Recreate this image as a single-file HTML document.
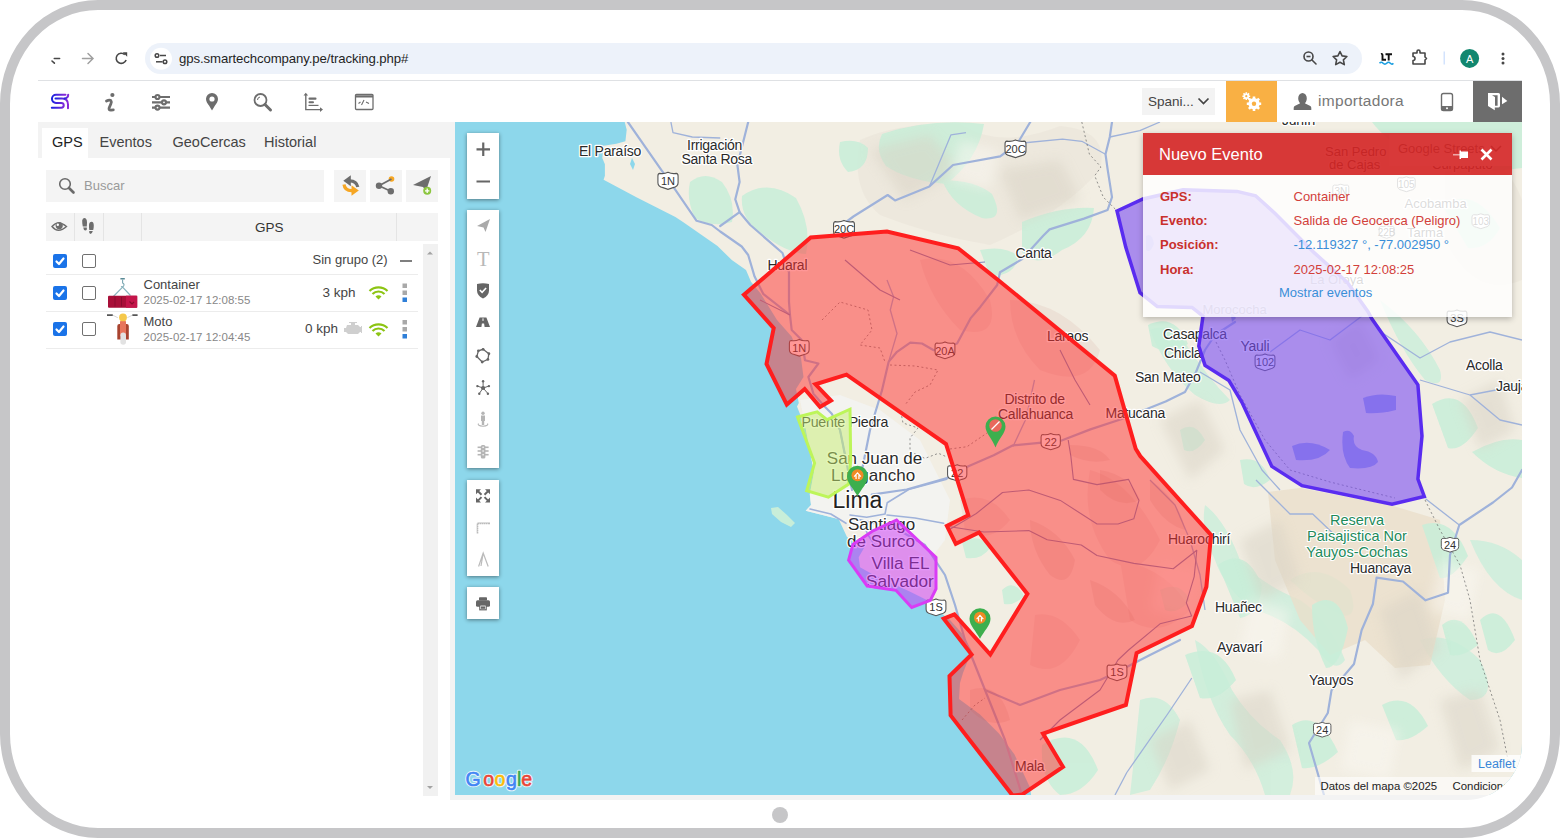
<!DOCTYPE html>
<html><head><meta charset="utf-8">
<style>
*{box-sizing:border-box;margin:0;padding:0}
html,body{width:1560px;height:838px;overflow:hidden;background:#fff;font-family:"Liberation Sans",sans-serif}
.a{position:absolute}
svg{position:absolute;overflow:visible}
#frame{left:0;top:0;width:1560px;height:838px;border:10px solid #c6c6c8;border-radius:98px/104px;z-index:50}
#home{left:772px;top:807px;width:16px;height:16px;border-radius:50%;background:#c6c6c8}
#pill{left:145px;top:43px;width:1217px;height:31px;border-radius:16px;background:#edf2fa}
#sep{left:38px;top:80px;width:1484px;height:1px;background:#dfe1e4}
#url{left:179px;top:51px;font-size:13.2px;color:#1f1f1f;letter-spacing:-0.1px;white-space:nowrap}
#screen{left:0;top:0;width:1560px;height:838px;clip-path:inset(81px 38px 38px 38px round 0 0 56px 0)}
.tab{position:absolute;top:133.5px;font-size:14.5px;color:#444;white-space:nowrap}
.ctl{position:absolute;left:467px;width:32px;background:#fff;box-shadow:0 1px 4px rgba(0,0,0,.45)}
.btn{position:absolute;top:170px;width:32px;height:32px;background:#f4f4f4}
.cb{position:absolute;width:14px;height:14px;border-radius:2px}
.cbon{background:#1a73e8}
.cboff{border:1.5px solid #707070;background:#fff}
.rsep{position:absolute;left:46px;width:372px;height:1px;background:#ececec}
.t{position:absolute;white-space:nowrap}
</style></head><body>
<div class="a" id="home"></div>
<div class="a" id="pill"></div>
<div class="a" id="sep"></div>
<div class="a" id="url">gps.smartechcompany.pe/tracking.php#</div>
<!-- browser icons -->
<svg style="left:0;top:0" width="1560" height="90">
  <g fill="none" stroke="#474747" stroke-width="1.6" stroke-linecap="round">
    <path d="M54.3 58.5 H59.6 M52 61 l2.4 2.2"/>
  </g>
  <g fill="none" stroke="#a0a0a0" stroke-width="1.5" stroke-linecap="round">
    <path d="M82.5 58.5 H93 M88 53.5 l5 5 l-5 5"/>
  </g>
  <g fill="none" stroke="#474747" stroke-width="1.6">
    <path d="M126.1 60 A5.1 5.1 0 1 1 124.8 54.6"/>
  </g>
  <path d="M122.8 52.3 L127.2 52.3 L127.2 56.7 Z" fill="#474747"/>
  <circle cx="161" cy="58.7" r="11" fill="#fff"/>
  <g stroke="#474747" stroke-width="1.5" fill="none">
    <circle cx="157" cy="55.5" r="1.8"/><path d="M160 55.5 H166"/>
    <circle cx="165" cy="61.8" r="1.8"/><path d="M156 61.8 H162.5"/>
  </g>
  <!-- right icons -->
  <g stroke="#474747" stroke-width="1.6" fill="none">
    <circle cx="1308.5" cy="56.5" r="4.5"/><path d="M1312 60 l4 4" stroke-linecap="round"/><path d="M1306.5 56.5 h4"/>
    <path d="M1340 51.5 l2.1 4.4 l4.8 .6 l-3.5 3.3 l.9 4.8 l-4.3 -2.3 l-4.3 2.3 l.9 -4.8 l-3.5 -3.3 l4.8 -.6 z" stroke-linejoin="round"/>
    <path d="M1413 53 h4 v-1.5 a1.5 1.5 0 0 1 3 0 v1.5 h5 v4 l1.5 1.5 l-1.5 1.5 v4 h-12 v-3.5 a2 2 0 0 0 0 -4 z" stroke-linejoin="round"/>
  </g>
  <path d="M1381 54 q1.5 -.5 1.5 1.5 v4.2 h3.5 M1385.5 54.2 h6.5 M1388.7 54.2 v6.3" stroke="#111" stroke-width="1.9" fill="none"/>
  <path d="M1379.5 63.2 q1.8 -1.8 3.6 0 t3.6 0 t3.6 0 t3 0" stroke="#1a9ee0" stroke-width="1.6" fill="none"/>
  <rect x="1443.5" y="51.5" width="1.5" height="13" fill="#d3e3fd"/>
  <circle cx="1469.6" cy="58.4" r="9.5" fill="#12876f"/>
  <text x="1469.6" y="62.6" text-anchor="middle" font-family="Liberation Sans" font-size="11" fill="#fff">A</text>
  <g fill="#474747"><circle cx="1503" cy="54" r="1.5"/><circle cx="1503" cy="58.5" r="1.5"/><circle cx="1503" cy="63" r="1.5"/></g>
</svg>

<div class="a" id="screen">
  <!-- header icons -->
  <svg style="left:0;top:0" width="1560" height="130">
    <defs><linearGradient id="lg" x1="0" x2="1"><stop offset="0" stop-color="#1b25e0"/><stop offset="1" stop-color="#8c2ad8"/></linearGradient></defs>
    <g fill="none" stroke="url(#lg)" stroke-width="2" stroke-linecap="round">
      <path d="M65.5 94.8 H56 A4.05 4.05 0 0 0 56 102.9 H61.3 A2.45 2.45 0 0 1 61.3 107.8 H51.8"/>
      <path d="M55.5 98.6 H62 Q68 98.6 68 104.5 V108.3"/>
      <path d="M68.2 94.8 Q68.2 98.2 64.5 98.6"/>
    </g>
    <circle cx="112.4" cy="95" r="2.1" fill="#6d6d6d"/>
    <path d="M106.5 101 Q109.5 99.4 110.9 100.6 Q111.8 101.6 110.8 104 L109.2 107.8 Q108.4 110.2 111 110.1 L113.3 109.9" stroke="#6d6d6d" stroke-width="2.8" fill="none" stroke-linecap="round" stroke-linejoin="round"/>
    <g stroke="#6d6d6d" stroke-width="2.2" fill="#fff">
      <path d="M152 97 H170 M152 102.3 H170 M152 107.6 H170"/>
      <circle cx="157.5" cy="97" r="2"/><circle cx="164" cy="102.3" r="2"/><circle cx="157.5" cy="107.6" r="2"/>
    </g>
    <path d="M212 93 a6 6 0 0 1 6 6 c0 2.5 -1.5 4.5 -3 6.5 l-3 5 l-3 -5 c-1.5 -2 -3 -4 -3 -6.5 a6 6 0 0 1 6 -6 z" fill="#6d6d6d"/>
    <circle cx="212" cy="99" r="2.6" fill="#fff"/>
    <g stroke="#6d6d6d" fill="none">
      <circle cx="260.5" cy="100" r="6" stroke-width="1.8"/>
      <path d="M265 104.5 l5.5 5.5" stroke-width="3" stroke-linecap="round"/>
      <path d="M257.5 100 a3 3 0 0 1 2.5 -3" stroke-width="1"/>
    </g>
    <g fill="#6d6d6d">
      <path d="M305.8 95 v14.6 h15" stroke="#6d6d6d" stroke-width="1.4" fill="none"/>
      <path d="M303.5 95.5 l2.3 -2.8 l2.3 2.8 z"/><path d="M320 107.3 l3 2.3 l-3 2.3 z"/>
      <rect x="308.5" y="97.5" width="8" height="2.2" rx="1"/>
      <rect x="308.5" y="101.3" width="5.5" height="2" rx="1"/>
      <rect x="308.5" y="104.8" width="10" height="1.2"/>
    </g>
    <g fill="none" stroke="#6d6d6d">
      <rect x="355.5" y="94.3" width="17.5" height="15.2" rx="1" stroke-width="1.3"/>
      <path d="M355.5 96.3 h17.5" stroke-width="2.2"/>
      <path d="M358.5 103.5 l2 -1.5 M361.5 105 l2.5 -5 M366 102 l3 1.5" stroke-width="1.1"/>
    </g>
    <!-- language select -->
    <rect x="1142" y="88" width="73" height="27" fill="#f3f3f3"/>
    <path d="M1198.5 98.5 l5 5 l5 -5" stroke="#444" stroke-width="1.7" fill="none"/>
    <rect x="1226" y="81" width="51" height="41" fill="#f9b044"/>
    <g fill="#fff">
      <circle cx="1254" cy="103.7" r="5.6"/>
      <g stroke="#fff" stroke-width="2.6"><path d="M1254 96.5 v14.4 M1246.8 103.7 h14.4 M1248.9 98.6 l10.2 10.2 M1259.1 98.6 l-10.2 10.2"/></g>
      <circle cx="1246.3" cy="96.2" r="2.8"/>
      <g stroke="#fff" stroke-width="1.6"><path d="M1246.3 92.3 v7.8 M1242.4 96.2 h7.8 M1243.5 93.4 l5.6 5.6 M1249.1 93.4 l-5.6 5.6"/></g>
    </g>
    <circle cx="1254" cy="103.7" r="2.2" fill="#f9b044"/>
    <circle cx="1246.3" cy="96.2" r="1.1" fill="#f9b044"/>
    <path d="M1302.5 93 a4.3 5.3 0 0 1 4.3 5.3 c0 2.5 -1 4 -2 5 l5.5 2.8 q1 .6 1 2 v1.8 h-17.6 v-1.8 q0 -1.4 1 -2 l5.5 -2.8 c-1 -1 -2 -2.5 -2 -5 a4.3 5.3 0 0 1 4.3 -5.3 z" fill="#6d6d6d"/>
    <rect x="1441.5" y="93.5" width="11" height="17" rx="2" fill="none" stroke="#6d6d6d" stroke-width="1.4"/>
    <rect x="1441.5" y="106" width="11" height="4.5" fill="#6d6d6d"/>
    <circle cx="1447" cy="108.2" r="1" fill="#fff"/>
    <rect x="1473" y="81" width="49" height="41" fill="#6d6d6d"/>
    <path d="M1488 93 H1498.5 Q1500 93 1500 94.5 V105.8 Q1500 107.5 1498.5 107.5 H1494.8 V110.2 L1488 106 Z" fill="#fff"/>
    <path d="M1492 95.2 H1497.6 V105.7 H1495 V97 Z" fill="#6d6d6d"/>
    <path d="M1502 96.8 L1507.3 101 L1502 104.3 Z" fill="#fff"/>
  </svg>
  <div class="t" style="left:1148px;top:94px;font-size:13.5px;color:#444">Spani...</div>
  <div class="t" style="left:1318px;top:92px;font-size:15.5px;color:#777;letter-spacing:.3px">importadora</div>

  <!-- left panel -->
  <div class="a" style="left:38px;top:122px;width:1484px;height:678px;background:#f3f3f3"></div>
  <div class="a" style="left:38px;top:158px;width:412px;height:642px;background:#fff"></div>
  <div class="a" style="left:42px;top:128px;width:46px;height:30px;background:#fff"></div>
  <div class="tab" style="left:52px;color:#222">GPS</div>
  <div class="tab" style="left:99.5px">Eventos</div>
  <div class="tab" style="left:172.5px">GeoCercas</div>
  <div class="tab" style="left:264px">Historial</div>
  <div class="a" style="left:46px;top:170px;width:278px;height:32px;background:#f4f4f4"></div>
  <div class="t" style="left:84px;top:178px;font-size:13px;color:#9a9a9a">Buscar</div>
  <div class="btn" style="left:334px"></div>
  <div class="btn" style="left:370px"></div>
  <div class="btn" style="left:406px"></div>
  <div class="a" style="left:46px;top:213px;width:392px;height:28px;background:#f4f4f4"></div>
  <div class="a" style="left:74px;top:213px;width:1px;height:28px;background:#e4e4e4"></div>
  <div class="a" style="left:103px;top:213px;width:1px;height:28px;background:#e4e4e4"></div>
  <div class="a" style="left:141px;top:213px;width:1px;height:28px;background:#e4e4e4"></div>
  <div class="a" style="left:396px;top:213px;width:1px;height:28px;background:#e4e4e4"></div>
  <div class="t" style="left:255px;top:220px;font-size:13.5px;color:#333">GPS</div>
  <div class="a" style="left:423px;top:244px;width:15px;height:552px;background:#f1f1f1"></div>
  <svg style="left:0;top:0" width="460" height="800">
    <path d="M427 254.5 l3 -3 l3 3 z" fill="#a3a3a3"/>
    <path d="M427 786 l3 3 l3 -3 z" fill="#a3a3a3"/>
    <!-- search icon -->
    <g stroke="#6a6a6a" fill="none"><circle cx="65" cy="184" r="5.3" stroke-width="1.6"/><path d="M69 188 l4.5 4.5" stroke-width="2.6" stroke-linecap="round"/></g>
    <!-- sync icon -->
    <path d="M350.8 175.3 L343.3 180.8 L350.8 186.3 Z" fill="#6d6d6d"/>
    <path d="M349 180.8 Q356.5 180.5 357.8 187" stroke="#6d6d6d" stroke-width="3.2" fill="none"/>
    <path d="M344 184.5 Q344.8 190.8 352 190.6" stroke="#f6a623" stroke-width="3.2" fill="none"/>
    <path d="M351.5 185.3 L358.8 190.6 L351.5 195.8 Z" fill="#f6a623"/>
    <!-- share -->
    <g fill="#6d6d6d"><circle cx="379" cy="185.8" r="3.2"/><circle cx="390.8" cy="191.2" r="3.2"/></g>
    <circle cx="391.5" cy="179" r="2.8" fill="#f6a623"/>
    <path d="M379 185.8 L391.5 179 M379 185.8 L390.8 191.2" stroke="#6d6d6d" stroke-width="1.8"/>
    <!-- send plus -->
    <path d="M413 185 L431 176 L426 191 L423 187 Z" fill="#6d6d6d"/>
    <circle cx="427.2" cy="190.8" r="4" fill="#8cc63f"/>
    <path d="M425 190.8 h4.4 M427.2 188.6 v4.4" stroke="#fff" stroke-width="1.3"/>
    <!-- eye -->
    <path d="M52 226.5 Q58 219.5 66.5 226.5 Q58 234 52 226.5 Z" fill="none" stroke="#6d6d6d" stroke-width="1.4"/>
    <circle cx="59.2" cy="225.6" r="3.6" fill="#6d6d6d"/>
    <circle cx="57.8" cy="224.7" r="1.2" fill="#fff"/>
    <!-- feet -->
    <path d="M84.2 218 Q87 218 87 222.5 L86.8 226.5 L82.8 226.5 Q82 222 82.2 220.5 Q82.6 218 84.2 218 Z" fill="#6d6d6d"/>
    <path d="M83.2 227.5 L86.8 227.5 Q87.3 230.5 85.4 230.6 Q83.6 230.4 83.2 227.5 Z" fill="#6d6d6d"/>
    <path d="M91.6 221.8 Q93.8 222 93.8 225.5 Q93.8 228 93.2 230 L89.3 230 Q88.8 227 89 225 Q89.3 221.8 91.6 221.8 Z" fill="#6d6d6d"/>
    <path d="M89.2 231 L92.8 231 Q92 234 90.4 234 Q88.8 233.6 89.2 231 Z" fill="#6d6d6d"/>
    <!-- check marks -->
    <g stroke="#fff" stroke-width="2" fill="none">
    </g>
  </svg>
  <div class="cb cbon" style="left:53px;top:254px"></div>
  <div class="cb cboff" style="left:82px;top:254px"></div>
  <div class="cb cbon" style="left:53px;top:286px"></div>
  <div class="cb cboff" style="left:82px;top:286px"></div>
  <div class="cb cbon" style="left:53px;top:322px"></div>
  <div class="cb cboff" style="left:82px;top:322px"></div>
  <svg style="left:0;top:0" width="460" height="400">
    <g stroke="#fff" stroke-width="2.2" fill="none" stroke-linecap="round" stroke-linejoin="round">
      <path d="M56.5 261.5 l2.5 2.5 l4.5 -5.5"/><path d="M56.5 293.5 l2.5 2.5 l4.5 -5.5"/><path d="M56.5 329.5 l2.5 2.5 l4.5 -5.5"/>
    </g>
    <!-- container icon -->
    <rect x="120.4" y="278" width="4.4" height="1.5" fill="#5a8a96"/>
    <path d="M122.6 279.5 v3.5 q2.2 1 1 3 q-1.2 1.5 -2.5 .3" stroke="#7aa7b2" stroke-width="1.1" fill="none"/>
    <path d="M122.6 287.2 L112.4 297.5 M122.6 287.2 L130.5 295.5" stroke="#8ab4be" stroke-width="1.2" fill="none"/>
    <rect x="108" y="295.7" width="29.2" height="12" rx="1" fill="#a80f38"/>
    <rect x="126" y="295.7" width="11.2" height="12" fill="#c4154a"/>
    <path d="M115 297 v9.5 M121.5 297 v9.5" stroke="#8a0c2e" stroke-width="1"/>
    <path d="M129.5 301.5 l2.5 2.5 l2 -2" stroke="#8a0c2e" stroke-width="1.2" fill="none"/>
    <!-- moto -->
    <path d="M107 315.2 h5.8 M132.3 315.2 h5.3" stroke="#555" stroke-width="1.7"/>
    <path d="M112.8 315.2 l5 2.5 M132.3 315.2 l-5 2.5" stroke="#ccc" stroke-width=".8"/>
    <path d="M117.3 326 q0 -2 2 -2 h7.5 q2 0 2 2 v13.5 h-11.5 z" fill="#a8432f"/>
    <rect x="120" y="320.5" width="6" height="16" rx="1.5" fill="#e7755c"/>
    <circle cx="123" cy="317.4" r="3.9" fill="#f5c84a"/>
    <rect x="120.4" y="332.4" width="5.6" height="12.4" rx="2.8" fill="#e2e2e2"/>
    <!-- wifi -->
    <g fill="none" stroke="#8cc413" stroke-width="2.2">
      <path d="M369.5 291 a13 13 0 0 1 18 0"/><path d="M372.5 294 a8.5 8.5 0 0 1 12 0"/>
      <path d="M369.5 328 a13 13 0 0 1 18 0"/><path d="M372.5 331 a8.5 8.5 0 0 1 12 0"/>
    </g>
    <path d="M375.5 296.5 a4.5 4.5 0 0 1 6 0 l-3 3 z" fill="#8cc413"/>
    <path d="M375.5 333.5 a4.5 4.5 0 0 1 6 0 l-3 3 z" fill="#8cc413"/>
    <!-- engine -->
    <path d="M347 325 h4 v-2 h-2 v-1 h8 v1 h-2 v2 h3 l2 2 h1 v-1 h1 v7 h-1 v-1 h-1 l-2 2 h-10 l-2 -2 h-2 v-4 h2 z" fill="#cfcfcf"/>
    <!-- dots -->
    <g fill="#a9a9a9"><rect x="402.5" y="283.5" width="4.5" height="4.5"/><rect x="402.5" y="290.5" width="4.5" height="4.5"/>
    <rect x="402.5" y="320" width="4.5" height="4.5"/><rect x="402.5" y="327" width="4.5" height="4.5"/></g>
    <g fill="#2f7fd8"><rect x="402.5" y="297.5" width="4.5" height="4.5"/><rect x="402.5" y="334" width="4.5" height="4.5"/></g>
    <path d="M400 261 h12" stroke="#555" stroke-width="1.5"/>
  </svg>
  <div class="rsep" style="top:273.5px"></div>
  <div class="rsep" style="top:311px"></div>
  <div class="rsep" style="top:348px"></div>
  <div class="t" style="left:312.5px;top:251.5px;font-size:13px;color:#444">Sin grupo (2)</div>
  <div class="t" style="left:143.5px;top:277px;font-size:13px;color:#444">Container</div>
  <div class="t" style="left:143.5px;top:294px;font-size:11.5px;color:#888">2025-02-17 12:08:55</div>
  <div class="t" style="left:143.5px;top:313.5px;font-size:13px;color:#444">Moto</div>
  <div class="t" style="left:143.5px;top:330.5px;font-size:11.5px;color:#888">2025-02-17 12:04:45</div>
  <div class="t" style="left:322.5px;top:285px;font-size:13.5px;color:#444">3 kph</div>
  <div class="t" style="left:305px;top:321px;font-size:13.5px;color:#444">0 kph</div>

  <!-- map -->
  <div class="a" style="left:455px;top:122px;width:1067px;height:673px;overflow:hidden;background:#8dd7eb">
    <svg style="left:-455px;top:-122px" width="1560" height="838">

<defs>
  <symbol id="sh" viewBox="0 0 24 20" overflow="visible">
    <path d="M3 2.2 Q7.5 3.2 12 1 Q16.5 3.2 21 2.2 Q23 2.4 23 5 V12.5 Q23 16.8 17.5 17.8 L12 19.6 L6.5 17.8 Q1 16.8 1 12.5 V5 Q1 2.4 3 2.2 Z" fill="#fff" stroke="#555" stroke-width="1.2"/>
  </symbol>
  <symbol id="pin" viewBox="0 0 22 32" overflow="visible">
    <path d="M11 0 A11 11 0 0 1 22 11 C22 18 15 24 11 32 C7 24 0 18 0 11 A11 11 0 0 1 11 0 Z" fill="#3daf4e"/>
    <circle cx="11" cy="10" r="6.3" fill="#f08a24"/>
    <path d="M7.5 11.5 L11 7.5 L14.5 11.5 M9.5 10 v4 M12.5 10 v4" stroke="#fff" stroke-width="1.3" fill="none"/>
  </symbol>
  <filter id="blur6" x="-20%" y="-20%" width="140%" height="140%"><feGaussianBlur stdDeviation="6"/></filter>
</defs>
<!-- land -->
<path id="land" fill="#f2eee3" d="M624.7 122 L626.7 129.7 L625.4 141.2 L616.4 143.8 L603.6 145.7 L602.3 157.9 L604.9 164.3 L604.9 175.8 L603.6 179.7 L636.9 197.6 L675.4 216.9 L683 222 L717.5 246 L731.8 260 L746 270 L751 281.7 L760.6 293.6 L777 320 L791.6 336.6 L801 358 L803.5 377 L796 389 L798.8 403 L797 406.5 L805.7 428.4 L814 472.3 L809.8 494.2 L811 505 L805.7 510.7 L838.6 519 L847 537 L864.4 547.3 L858.7 557.3 L860 567.3 L873 574.5 L894.5 584.5 L910.2 591.7 L930.3 601.7 L943 614.4 L950 620 L961.6 633 L971.6 650.2 L967.7 661 L963 673 L960 683 L959 699 L980 714.4 L999 733.5 L1014.5 754.5 L1029.8 787 L1032 800 L1530 800 L1530 110 Z"/>
<path fill="#c8eed9" d="M771 508 L778 507 L787 515 L795 523 L791 527 L781 522 L772 514 Z"/>
<path fill="#8dd7eb" d="M632 158 L635 164 L633 170 L630 164 Z"/>
<!-- hillshade / terrain -->
<g fill="#dad4c8" opacity=".2">
  <path d="M860 140 Q900 122 960 124 Q1000 150 1060 126 Q1110 130 1100 170 Q1060 215 990 245 Q930 235 880 215 Q850 190 860 140 Z"/>
  <path d="M1445 170 Q1500 140 1522 200 L1522 280 Q1475 300 1445 240 Z"/>
</g>
<g fill="#cfeedc" opacity=".9">
  <path d="M1205 505 Q1225 520 1240 560 Q1262 585 1300 600 Q1330 620 1345 660 Q1335 675 1318 650 Q1290 620 1255 610 Q1225 590 1215 560 Q1200 530 1205 505 Z"/>
  <path d="M1195 640 Q1215 650 1232 690 Q1250 720 1280 740 Q1300 770 1290 795 L1265 795 Q1255 760 1230 735 Q1205 700 1195 640 Z"/>
  <path d="M1140 700 Q1165 690 1180 720 Q1170 760 1150 790 L1130 795 Q1135 750 1140 700 Z"/>
  <path d="M1290 580 Q1320 560 1350 590 Q1360 620 1340 615 Q1310 600 1290 580 Z"/>
  <path d="M1420 640 Q1450 630 1480 660 Q1500 700 1470 700 Q1440 680 1420 640 Z"/>
  <path d="M1150 330 Q1170 320 1190 350 Q1210 380 1230 400 Q1220 410 1195 395 Q1165 370 1150 330 Z"/>
  <path d="M1380 300 Q1420 330 1440 370 Q1445 390 1425 380 Q1400 350 1380 300 Z"/>
  <path d="M1470 540 Q1500 540 1522 560 L1522 600 Q1490 590 1470 540 Z"/>
</g>
<path fill="#eadfca" opacity=".8" d="M1268 492 L1300 488 L1390 505 L1440 520 L1445 600 L1430 665 L1395 668 L1365 640 L1330 655 L1300 620 L1275 560 Z"/>
<g fill="#c8eed9" opacity=".85">
  <path d="M690 182 Q705 170 722 182 Q736 200 732 222 Q712 228 695 218 Q686 200 690 182 Z"/>
  <path d="M742 196 Q768 178 796 198 Q812 226 806 254 Q784 252 760 232 Q740 218 742 196 Z"/>
  <path d="M882 134 Q930 118 984 124 Q978 160 946 184 Q906 180 886 166 Q874 150 882 134 Z"/>
  <path d="M840 142 Q858 138 868 148 Q868 170 848 172 Q836 160 840 142 Z"/>
  <path d="M942 180 Q975 180 992 194 Q1006 222 982 218 Q952 206 942 180 Z"/>
  <path d="M1022 222 Q1060 206 1094 208 Q1092 238 1062 250 Q1036 270 1022 252 Z"/>
  <path d="M980 250 Q1005 245 1018 256 Q1016 276 990 276 Z"/>
  <path d="M1372 122 L1522 122 L1522 168 Q1470 176 1420 160 Q1385 140 1372 122 Z"/>
  <path d="M1442 205 Q1475 185 1500 228 Q1488 250 1468 248 Z"/>
  <path d="M1148 325 Q1175 312 1188 344 Q1168 356 1152 346 Z"/>
  <path d="M1432 404 Q1462 385 1478 428 Q1462 452 1448 448 Z"/>
  <path d="M1472 452 Q1500 436 1522 440 L1522 478 Q1494 474 1472 452 Z"/>
  <path d="M1218 565 Q1245 545 1262 585 Q1260 615 1240 618 Z"/>
  <path d="M1312 605 Q1338 588 1348 628 Q1340 668 1326 668 Q1312 640 1312 605 Z"/>
  <path d="M1185 655 Q1220 640 1236 680 Q1218 702 1200 698 Z"/>
  <path d="M1292 725 Q1318 708 1338 752 Q1318 770 1302 768 Z"/>
  <path d="M1442 625 Q1462 608 1478 645 Q1462 658 1450 655 Z"/>
  <path d="M1382 705 Q1410 690 1428 726 Q1410 742 1396 740 Z"/>
  <path d="M1422 525 Q1452 515 1468 556 Q1452 580 1440 578 Z"/>
  <path d="M1042 745 Q1080 722 1098 770 Q1082 795 1060 795 Q1040 780 1042 745 Z"/>
  <path d="M962 542 Q980 532 990 548 Q982 560 966 558 Z"/>
  <path d="M1002 590 Q1014 578 1024 596 Q1014 606 1004 604 Z"/>
  <path d="M1180 430 Q1195 420 1205 440 Q1195 455 1184 450 Z"/>
  <path d="M1480 620 Q1500 600 1515 640 Q1500 660 1488 650 Z"/>
  <path d="M1240 460 Q1262 455 1270 480 Q1255 492 1244 484 Z"/>
  <path d="M1160 590 Q1180 580 1190 600 Q1178 615 1165 610 Z"/>
</g>
<g fill="#b8645a" opacity=".09">
  <path d="M920 260 Q960 250 990 300 Q1000 340 960 330 Q930 300 920 260 Z"/>
  <path d="M1010 300 Q1060 300 1100 350 Q1090 390 1040 370 Q1010 340 1010 300 Z"/>
  <path d="M1090 470 Q1130 480 1160 540 Q1140 580 1110 560 Q1080 520 1090 470 Z"/>
  <path d="M1035 615 Q1060 610 1080 640 Q1060 680 1030 665 Z"/>
  <path d="M1120 560 Q1170 570 1190 610 Q1160 640 1130 620 Z"/>
  <path d="M960 500 Q990 490 1010 520 Q990 545 965 530 Z"/>
</g>
<g filter="url(#blur6)" opacity=".5">
  <g fill="#d8d2c4">
    <path d="M870 150 L930 135 L960 170 L905 200 Z"/>
    <path d="M1000 170 L1060 160 L1080 200 L1020 220 Z"/>
    <path d="M1160 420 L1200 400 L1225 450 L1190 480 Z"/>
    <path d="M1240 540 L1280 520 L1300 580 L1260 600 Z"/>
    <path d="M1230 700 L1270 690 L1290 750 L1245 770 Z"/>
    <path d="M1380 610 L1420 590 L1440 650 L1400 680 Z"/>
    <path d="M1460 400 L1500 380 L1515 430 L1480 450 Z"/>
    <path d="M1440 700 L1480 690 L1500 750 L1460 770 Z"/>
    <path d="M1150 740 L1190 720 L1210 770 L1170 790 Z"/>
    <path d="M1330 340 L1360 320 L1380 360 L1350 380 Z"/>
  </g>
  <g fill="#faf8f2">
    <path d="M1250 600 L1290 610 L1280 660 L1240 650 Z"/>
    <path d="M1160 560 L1200 570 L1190 620 L1150 610 Z"/>
    <path d="M1440 560 L1480 570 L1470 620 L1430 610 Z"/>
    <path d="M1350 720 L1400 730 L1390 780 L1340 770 Z"/>
    <path d="M960 140 L1000 150 L990 190 L950 180 Z"/>
  </g>
</g>
<!-- urban Lima -->
<path fill="#f3f3f1" opacity=".9" d="M800 400 L840 395 L880 410 L920 440 L950 500 L945 540 L930 560 L900 540 L860 530 L838 519 L805.7 510.7 L811 505 L809.8 494.2 L814 472.3 L805.7 428.4 Z"/>
<!-- roads / rivers -->
<g fill="none" stroke="#9fb2da" stroke-width="2.2" stroke-linejoin="round" stroke-linecap="round">
  <path d="M627.9 122 L662.3 171.4 L673 186.4 L696.6 220.8 L711.7 225 L720.2 231.5 L741.7 246.5 L748.2 255 L754.6 276.6 L763.2 293.8 L790 315 L791.7 330 L801.7 340 L805 360.2 L818.4 363.5 L808.4 377 L813.4 393.6 L823.4 405.3 L831.8 413.7 L840 430 L846 460 L852 490"/>
  <path d="M748.2 122 L737.4 165 L739.6 182 L735.3 199.3 L739.6 212.2 L720.2 226"/>
  <path d="M739.6 212.2 L750.3 225 L782.5 253 L789 272.3 L789 302 L790 315"/>
  <path d="M836.2 229.4 L853.4 216.5 L887.7 195 L895 200.4 L929.4 186.4 L953 165 L1000.2 156.4 L1017.4 143.5 L1030.3 122"/>
  <path d="M1000 272.3 L1021.7 259.4 L1043.2 235.8 L1049.6 229.4 L1084 218.6 L1107.6 210 L1112 197.2 L1107.6 169.2 L1105.5 154.2 L1109.8 137 L1112 122"/>
  <path d="M882 390.3 L888.6 361.9 L897 351.8 L910.3 342.7 L922 343.5 L933.7 350.2 L957.1 343.5 L970.5 318.4 L980.5 306.7 L997.2 285 L1000 272.3"/>
  <path d="M882 390.3 L870 430 L860 480"/>
  <path d="M871.8 494.6 L906.7 489.5 L947 478 L968.4 466.3 L993.7 455.2 L1013 445.3 L1042 442.6 L1060.3 441 L1090.4 429.4 L1122.6 418.7 L1165.6 401.5 L1185 392 L1196 372 L1205 350 L1215 335 L1235 322"/>
  <path d="M860 520 L895 528 L925 545 L945 575 L955 605 L965 640 L985 690 L1005 740 L1022 795"/>
  <path d="M985 690 L1020 705 L1060 690 L1100 680 L1117 672 L1150 655 L1180 640"/>
  <path d="M1324 795 L1309 743 L1327.8 713 L1331.5 690.4 L1354 664 L1361.6 630.3 L1372.9 604 L1376.6 577.7 L1403 581.5 L1425.5 600.3 L1448 592.7 L1450 555 L1459.3 525 L1493 502.5 L1512 487.5 L1522 470"/>
</g>
<g fill="none" stroke="#9fb2da" stroke-width="1.3" stroke-linejoin="round">
  <path d="M670.9 122 L673 132.7 L692.3 137 L720.2 138"/>
  <path d="M1017.4 143.5 L1062.5 139.2 L1081.8 141.3 L1105.5 154.2"/>
  <path d="M929.4 186.4 L950.9 134.9 L966 132.7"/>
  <path d="M1109.8 137 L1139.8 130.6 L1160 122"/>
  <path d="M887 280 L893.6 296.7 L890.3 310 L897 333.5 L888.6 361.9"/>
  <path d="M1034.5 380 L1026 418.7 L1013 446.6"/>
  <path d="M1425.5 498.8 L1459.3 525"/>
  <path d="M1256 480 L1290 514 L1312.7 514 L1340 540"/>
  <path d="M1191.8 678 L1168 713.5 L1126.8 772.5 L1115 795"/>
  <path d="M1420 380 L1470 395 L1522 385"/>
  <path d="M1378 330 L1420 358 L1450 342 L1490 332 L1522 340"/>
  <path d="M1200 372 L1230 390 L1240 430 L1262 470 L1280 490"/>
  <path d="M1270 352 L1300 330 L1330 340 L1362 316"/>
  <path d="M1470 395 L1500 420 L1522 425"/>
  <path d="M1150 480 L1175 505 L1190 540 L1200 575 L1205 610"/>
</g>
<g fill="none" stroke="#7f86b8" stroke-width="1.1" stroke-linejoin="round">
  <path d="M950 529.3 L976.3 513.5 L1002.5 492.5 L1028.8 490 L1060.3 500.4 L1097 524 L1118 524 L1133.8 518.8 L1139 500.4 L1128.6 479.4 L1097 484.6 L1073.4 479.4 L1070.8 455.8 L1068.2 440"/>
  <path d="M950 526.7 L984 532 L1028.8 530.6 L1047.2 539.8 L1081.3 545 L1097 555.5 L1133.8 563.4 L1173.2 568.7 L1196.8 550.3 L1194.2 576.6 L1186.3 602.8 L1191.6 616 L1160 623.8 L1128.6 650 L1118 660 L1100 690 L1060 720 L1040 740"/>
  <path d="M910 250 L950 265 L985 262"/>
  <path d="M1060 350 L1075 380 L1090 405"/>
  <path d="M845 260 L880 290 L900 300"/>
  <path d="M760 300 L790 315"/>
</g>
<g fill="#9a5a50" opacity=".1">
  <path d="M1030 520 Q1060 530 1075 560 Q1070 590 1050 575 Q1030 550 1030 520 Z"/>
  <path d="M1100 470 Q1130 475 1140 500 Q1120 510 1100 490 Z"/>
  <path d="M1090 580 Q1120 590 1135 620 Q1115 630 1095 605 Z"/>
  <path d="M1070 445 Q1100 445 1110 460 Q1090 465 1070 455 Z"/>
  <path d="M1150 480 Q1180 500 1185 530 Q1165 525 1150 500 Z"/>
  <path d="M970 690 Q1000 680 1010 720 Q990 730 970 710 Z"/>
</g>
<g fill="none" stroke="#666" stroke-width="1" stroke-dasharray="2 2.5" opacity=".7">
  <path d="M1081.8 122 L1089.4 154.2 L1101 167 L1094.7 175.7 L1103.3 197.2 L1118.4 212.2"/>
  <path d="M822 320 L840 302 L868 310 L872 330 L860 345 L880 348 L885 362"/>
  <path d="M890 365 L915 366 L938 370 L930 385 L915 392 L905 405"/>
  <path d="M1210 330 L1225 360 L1240 395 L1265 440 L1290 470 L1330 482 L1395 498"/>
  <path d="M1425 500 L1440 530 L1460 565 L1470 600 L1480 660 L1500 720 L1510 770"/>
  <path d="M962 720 L975 705 L985 698"/>
  <path d="M900.8 411.7 L903 423 L918 428 L910 438 L910 451.7 L925 458.4 L938.4 453.3 L947 457"/>
  <path d="M950 449 L967 446.7 L987 433"/>
</g>
<g fill="#8a9de6" opacity=".85">
  <path d="M1363 398 Q1378 392 1396 396 L1396 410 Q1380 414 1366 413 Z"/>
  <path d="M1343 432 Q1350 428 1354 436 Q1352 446 1362 450 Q1376 452 1378 462 Q1372 470 1350 468 Q1340 455 1343 432 Z"/>
  <path d="M1292 446 Q1310 438 1330 450 Q1320 462 1296 460 Z"/>
  <path d="M1230 310 L1236 318 L1232 322 Z"/>
  <path d="M1146 236 Q1152 232 1154 244 Q1150 254 1146 250 Z"/>
</g>
<g fill="none" stroke="#9fb2da" stroke-width="1.6" stroke-linejoin="round" stroke-linecap="round">
  <path d="M946.7 479.2 L908.7 489.5 L887.2 502.8 L885 514 L866.7 517.2 L850 515"/>
  <path d="M810 509 L830.8 514 L846 523.3"/>
  <path d="M887 515 L915 518 L943.6 523.3"/>
  <path d="M860 480 L852 470 L845 455 L840 430"/>
  <path d="M862 521 L868 535 L875 545"/>
</g>
<!-- shields -->
<g>
  <use href="#sh" x="657" y="171" width="22" height="19"/>
  <use href="#sh" x="1003.5" y="139" width="24" height="19"/>
  <use href="#sh" x="832" y="219.5" width="24" height="19"/>
  <use href="#sh" x="788.5" y="338.5" width="21.5" height="18"/>
  <use href="#sh" x="933" y="341" width="24" height="18"/>
  <use href="#sh" x="1040" y="432.6" width="21.4" height="17.5"/>
  <use href="#sh" x="946.4" y="463.8" width="21.6" height="17.5"/>
  <use href="#sh" x="1254" y="353" width="22" height="18"/>
  <use href="#sh" x="1446" y="309" width="22" height="18"/>
  <use href="#sh" x="925" y="598" width="22" height="18"/>
  <use href="#sh" x="1106" y="663" width="22" height="18"/>
  <use href="#sh" x="1440.5" y="536" width="19" height="17"/>
  <use href="#sh" x="1312.7" y="720.5" width="19" height="18"/>
</g>
<g font-family="Liberation Sans" font-size="11" fill="#333" text-anchor="middle">
  <text x="668" y="184.5">1N</text>
  <text x="1015.5" y="152.5">20C</text>
  <text x="844" y="233">20C</text>
  <text x="799.2" y="351.5">1N</text>
  <text x="945" y="354.5">20A</text>
  <text x="1050.7" y="445.5">22</text>
  <text x="957.2" y="476.5">22</text>
  <text x="1265" y="366">102</text>
  <text x="1457" y="322">3S</text>
  <text x="936" y="611">1S</text>
  <text x="1117" y="676">1S</text>
  <text x="1450" y="549">24</text>
  <text x="1322.2" y="733.5">24</text>
</g>
<g fill="#ff3030" fill-opacity=".35">
  <rect x="832" y="222" width="24" height="14" opacity="0"/>
</g>
<g font-family="Liberation Sans" font-size="13" fill="#3c3c3c" stroke="#fff" stroke-width="2.6" stroke-linejoin="round" paint-order="stroke">
  <text x="1404.5" y="208">Acobamba</text>
  <text x="1407" y="237">Tarma</text>
  <text x="1310" y="283.5">La Oroya</text>
  <text x="1202.4" y="314">Morococha</text>
  <text x="1325" y="156">San Pedro</text>
  <text x="1329" y="169">de Cajas</text>
  <text x="1432" y="169">Curpaputo</text>
</g>
<g>
  <use href="#sh" x="1394.7" y="176" width="23.3" height="16"/>
  <use href="#sh" x="1331" y="183.5" width="19.6" height="14.5"/>
  <use href="#sh" x="1469" y="213" width="23.6" height="16"/>
  <use href="#sh" x="1375" y="225" width="23.3" height="13.6"/>
</g>
<g font-family="Liberation Sans" font-size="10" fill="#333" text-anchor="middle">
  <text x="1406.3" y="188">105</text><text x="1340.8" y="194.5">3N</text><text x="1480.8" y="225">103</text><text x="1386.6" y="235.5">22B</text>
</g>
<!-- labels -->
<g font-family="Liberation Sans" font-size="14" letter-spacing="-0.25" fill="#2a2a2a" stroke="#fff" stroke-width="2.6" stroke-linejoin="round" paint-order="stroke" text-anchor="start">
  <text x="579" y="156">El Paraíso</text>
  <text x="687" y="150">Irrigación</text>
  <text x="681.5" y="164">Santa Rosa</text>
  <text x="1015.5" y="258">Canta</text>
  <text x="1135" y="382">San Mateo</text>
  <text x="1163" y="339">Casapalca</text>
  <text x="1164" y="358">Chicla</text>
  <text x="1466" y="370">Acolla</text>
  <text x="1496" y="391">Jauja</text>
  <text x="1350" y="573">Huancaya</text>
  <text x="1215" y="612">Huañec</text>
  <text x="1217" y="652">Ayavarí</text>
  <text x="1309" y="685">Yauyos</text>
  <text x="1282" y="125">Junín</text>
</g>
<g font-family="Liberation Sans" font-size="14" letter-spacing="-0.25" fill="#2a2a2a" stroke="#fff" stroke-width="2.6" stroke-linejoin="round" paint-order="stroke">
  <text x="767.5" y="270">Huaral</text>
  <text x="1047" y="341">Laraos</text>
  <text x="1004.5" y="404">Distrito de</text>
  <text x="998" y="419">Callahuanca</text>
  <text x="1105.5" y="418">Matucana</text>
  <text x="1168" y="544">Huarochirí</text>
  <text x="1015" y="771">Mala</text>
  <text x="1240.5" y="351">Yauli</text>
  <text x="801.5" y="427" font-size="14.2">Puente Piedra</text>
</g>
<g font-family="Liberation Sans" font-size="17" fill="#2b2b2b" stroke="#fff" stroke-width="2.5" stroke-linejoin="round" paint-order="stroke">
  <text x="826.8" y="463.5">San Juan de</text>
  <text x="831" y="481">Lurigancho</text>
  <text x="848" y="529.5" font-size="17">Santiago</text>
</g>
<text x="847" y="546.5" font-family="Liberation Sans" font-size="17" fill="#2b2b2b" stroke="#fff" stroke-width="2.5" paint-order="stroke">de Surco</text>
<text x="832.5" y="508" font-family="Liberation Sans" font-size="23" fill="#222" stroke="#fff" stroke-width="2.5" paint-order="stroke">Lima</text>
<g font-family="Liberation Sans" font-size="17.2" fill="#2b2b2b" stroke="#fff" stroke-width="2.5" paint-order="stroke">
  <text x="871.5" y="569">Villa EL</text>
  <text x="866" y="587">Salvador</text>
</g>
<g font-family="Liberation Sans" font-size="14.5" fill="#1e8a5a" stroke="#fff" stroke-width="2.2" paint-order="stroke" text-anchor="middle">
  <text x="1357" y="524.5">Reserva</text>
  <text x="1357" y="540.5">Paisajistica Nor</text>
  <text x="1357" y="557">Yauyos-Cochas</text>
</g>
<!-- geofences -->
<path fill="#ff3030" fill-opacity="0.5" stroke="#ff1e1e" stroke-width="4" d="M743.9 294.8 L810.7 237.5 L887 231.5 L958.2 248.3 L998.4 280.2 L1114.8 375.6 L1135.7 448.7 L1140.2 456 L1211 535 L1206.4 586.8 L1192 626 L1136.6 653 L1125.9 705 L1043 733.5 L1063 767 L1022 794.6 L1012.6 795.5 L950.6 715.4 L949.5 676 L971.6 654.5 L943.7 618.7 L954.4 614.4 L990.3 654.5 L1027.4 594 L979 532.4 L955.8 543.8 L946.9 526 L968.3 515.2 L946 444 L846.5 374.7 L815.5 384.3 L831 400.5 L820 407 L804.7 389 L786.8 404.6 L766.5 364 L773.7 328.2 Z"/>
<path fill="#c8ee70" fill-opacity="0.5" stroke="#bdf55a" stroke-width="3" d="M797.5 417 L817.2 411.8 L827 419.7 L850 409.2 L850.7 460.4 L848.7 484.1 L828.4 497.2 L806.7 490.7 L814.6 463 Z"/>
<path fill="#c930f5" fill-opacity="0.5" stroke="#d93cf5" stroke-width="3" d="M873 530.8 L896.6 520 L936 557.3 L936 588.8 L930.3 600.3 L911.7 607.4 L895.9 590.3 L867.2 586 L848.6 560.2 L852.9 544.4 Z"/>
<path fill="#7a4cf2" fill-opacity="0.6" stroke="#5a2cf0" stroke-width="3.5" d="M1117 211 L1143 199 L1183 189.7 L1237 191.4 L1255.6 195.8 L1274.6 213 L1314.4 252.9 L1347.3 282.3 L1368 311.7 L1372 319 L1417.9 384.8 L1422 436 L1417.9 479 L1424.3 496.5 L1392 504.2 L1302 485.7 L1271.8 466.4 L1241.8 402 L1228.9 380.5 L1205 365.4 L1198.8 346 L1203 316 L1192 307.4 L1157.3 306.5 L1140 292.7 L1125.8 247.3 Z"/>
<!-- markers -->
<use href="#pin" x="847" y="465" width="21" height="32"/>
<use href="#pin" x="969.5" y="607.5" width="21" height="32"/>
<path d="M995.5 416.5 A10 10 0 0 1 1005.5 426.5 C1005.5 433 999 438.5 995.5 447.5 C992 438.5 985.5 433 985.5 426.5 A10 10 0 0 1 995.5 416.5 Z" fill="#3daf4e"/>
<circle cx="995.5" cy="425.5" r="6.3" fill="#e8685c"/>
<path d="M991.5 429.5 L999.5 421.5" stroke="#fff" stroke-width="1.3"/>
<!-- google streets select (behind popup) -->
<rect x="1389.5" y="134.5" width="122" height="31.5" fill="#fff"/>
<text x="1398" y="153" font-family="Liberation Sans" font-size="13" fill="#555">Google Streets</text>
<path d="M1491 146 l5 5 l5 -5" stroke="#555" stroke-width="1.5" fill="none"/>
<!-- attribution -->
<rect x="1315" y="777" width="207" height="18" fill="#fff" opacity=".6"/>
<text x="1320.5" y="790" font-family="Liberation Sans" font-size="11.4" fill="#222">Datos del mapa ©2025</text>
<text x="1452.5" y="790" font-family="Liberation Sans" font-size="11.4" fill="#222">Condiciones</text>
<rect x="1471.5" y="755" width="52" height="17" fill="#fff" opacity=".8"/>
<text x="1478" y="768" font-family="Liberation Sans" font-size="12.5" fill="#3a86d8">Leaflet</text>
<g font-family="Liberation Sans" font-size="19.5" stroke-width="2.6" stroke-linejoin="round" paint-order="stroke">
  <text x="465.5" y="785.5" fill="#4285f4" stroke="#e8f6fb">G</text>
  <text x="483.3" y="785.5" fill="#ea4335" stroke="#e8f6fb">o</text>
  <text x="494.5" y="785.5" fill="#fbbc05" stroke="#e8f6fb">o</text>
  <text x="506" y="785.5" fill="#4285f4" stroke="#e8f6fb">g</text>
  <text x="517" y="785.5" fill="#34a853" stroke="#e8f6fb">l</text>
  <text x="521.3" y="785.5" fill="#ea4335" stroke="#e8f6fb">e</text>
</g>
<g font-family="Liberation Sans" font-size="19.5" fill="none" stroke-width=".6">
  <text x="465.5" y="785.5" stroke="#4285f4">G</text>
  <text x="483.3" y="785.5" stroke="#ea4335">o</text>
  <text x="494.5" y="785.5" stroke="#fbbc05">o</text>
  <text x="506" y="785.5" stroke="#4285f4">g</text>
  <text x="517" y="785.5" stroke="#34a853">l</text>
  <text x="521.3" y="785.5" stroke="#ea4335">e</text>
</g>

    </svg>
  </div>

  <!-- map controls -->
  <div class="ctl" style="top:133px;height:66px"></div>
  <div class="ctl" style="top:210px;height:258px"></div>
  <div class="ctl" style="top:480px;height:96px"></div>
  <div class="ctl" style="top:587px;height:32px"></div>
  <svg style="left:0;top:0" width="1560" height="838">
    <path d="M476.5 149.3 h13.5 M483.25 142.5 v13.5 M476.5 181.5 h13.5" stroke="#666" stroke-width="2.2"/>
    <path d="M477 226 L490 219 L485.5 232 L483.5 227.5 Z" fill="#aaa"/>
    <text x="483.2" y="265.7" text-anchor="middle" font-family="Liberation Serif" font-size="20.5" fill="#b8b8b8">T</text>
    <path d="M477 284 q6 -1.5 12 0 v6.5 q0 5 -6 8 q-6 -3 -6 -8 z" fill="#666"/>
    <path d="M479.8 290 l2.3 2.3 l4 -4.3" stroke="#fff" stroke-width="1.6" fill="none"/>
    <path d="M479.6 317.5 L486.4 317.5 L490 327 L484.6 327 L484.1 323.6 L481.9 323.6 L481.4 327 L476 327 Z" fill="#666"/>
    <rect x="482.5" y="318.3" width="1" height="2.6" fill="#fff"/>
    <path d="M483.1 349.3 L488.9 353.7 L487.9 359.4 L482.2 362 L476.8 356.5 L478.4 350.8 Z" stroke="#666" stroke-width="1.3" fill="none"/>
    <g fill="#666"><circle cx="483.1" cy="349.3" r="1.4"/><circle cx="488.9" cy="353.7" r="1.4"/><circle cx="487.9" cy="359.4" r="1.4"/><circle cx="482.2" cy="362" r="1.4"/><circle cx="476.8" cy="356.5" r="1.4"/><circle cx="478.4" cy="350.8" r="1.4"/></g>
    <g stroke="#666" stroke-width="1"><path d="M483.1 388 L483.1 381.5 M483.1 388 L488.9 386.1 M483.1 388 L487.9 393.5 M483.1 388 L479.3 393.5 M483.1 388 L477.4 386.1"/></g>
    <circle cx="483.1" cy="388" r="2.1" fill="#666"/>
    <g fill="#666"><circle cx="483.1" cy="381.3" r="1.2"/><circle cx="488.9" cy="386.1" r="1.2"/><circle cx="487.9" cy="393.7" r="1.2"/><circle cx="479.3" cy="393.7" r="1.2"/><circle cx="477.4" cy="386.1" r="1.2"/></g>
    <g fill="#b5b5b5"><circle cx="483" cy="413.2" r="1.7"/><path d="M481 415.5 h4 v5.5 h-0.8 v4 h-2.4 v-4 h-0.8 z"/></g>
    <path d="M478.5 423.5 Q477 425.5 483 426.2 Q489 425.5 487.5 423.5" stroke="#b5b5b5" stroke-width="1.1" fill="none"/>
    <g fill="#b5b5b5"><rect x="480.8" y="445" width="4.6" height="13.5" rx="1.5"/><rect x="477.6" y="446.5" width="11" height="1.6"/><rect x="477.6" y="450.2" width="11" height="1.6"/><rect x="477.6" y="453.9" width="11" height="1.6"/></g>
    <g fill="#fff"><circle cx="483.1" cy="447.3" r=".8"/><circle cx="483.1" cy="451" r=".8"/><circle cx="483.1" cy="454.7" r=".8"/></g>
    <g fill="#666"><path d="M476 489.3 h5 l-5 5 z M490 489.3 h-5 l5 5 z M476 502.6 h5 l-5 -5 z M490 502.6 h-5 l5 -5 z"/></g>
    <g stroke="#666" stroke-width="2"><path d="M477.5 490.8 l4 4 M488.5 490.8 l-4 4 M477.5 501.1 l4 -4 M488.5 501.1 l-4 -4"/></g>
    <path d="M477.5 523.4 h12.5 M477.5 523.4 v10" stroke="#bbb" stroke-width="1.6" fill="none"/>
    <path d="M479.5 523.4 v1.5 M481.5 523.4 v1.5 M483.5 523.4 v1.5 M485.5 523.4 v1.5 M487.5 523.4 v1.5 M477.5 525.5 h1.5 M477.5 527.5 h1.5 M477.5 529.5 h1.5 M477.5 531.5 h1.5" stroke="#fff" stroke-width=".6"/>
    <path d="M478.6 566.5 L483.2 553 L488.2 566.5 M483.2 553 L481 566" stroke="#bbb" stroke-width="1.2" fill="none"/>
    <g fill="#666"><rect x="479" y="597.2" width="8" height="3.3" rx=".8"/><rect x="476" y="600.3" width="14" height="6.5" rx="1.5"/><rect x="479.2" y="604.5" width="7.6" height="5.9"/></g>
    <rect x="480.4" y="605.6" width="5.2" height="3.6" fill="#fff"/><rect x="481" y="606.4" width="4" height="2.4" fill="#666"/>
  </svg>

  <!-- popup -->
  <div class="a" style="left:1143px;top:133px;width:369px;height:184px;box-shadow:0 2px 6px rgba(0,0,0,.25)">
    <div class="a" style="left:0;top:0;width:369px;height:42px;background:rgba(212,36,36,.9)"></div>
    <div class="a" style="left:0;top:42px;width:369px;height:142px;background:rgba(255,255,255,.82)"></div>
    <div class="t" style="left:16px;top:12px;font-size:16.5px;color:#fff">Nuevo Evento</div>
    <svg style="left:0;top:0" width="369" height="184">
      <path d="M338.5 16.5 l10 10 M348.5 16.5 l-10 10" stroke="#fff" stroke-width="2.6"/>
      <path d="M310 21.8 h12" stroke="#fff" stroke-width="1.2" opacity=".7"/>
      <rect x="318" y="18.5" width="7" height="6.5" fill="#fff"/>
      <rect x="316.5" y="17.5" width="1.5" height="8.5" fill="#fff"/>
    </svg>
    <div class="t" style="left:17px;top:56px;font-size:13px;color:#c9302c;font-weight:bold">GPS:</div>
    <div class="t" style="left:17px;top:80px;font-size:13px;color:#c9302c;font-weight:bold">Evento:</div>
    <div class="t" style="left:17px;top:104px;font-size:13px;color:#c9302c;font-weight:bold">Posición:</div>
    <div class="t" style="left:17px;top:129px;font-size:13px;color:#c9302c;font-weight:bold">Hora:</div>
    <div class="t" style="left:150.5px;top:56px;font-size:13px;color:#d2403a">Container</div>
    <div class="t" style="left:150.5px;top:80px;font-size:13px;color:#d2403a">Salida de Geocerca (Peligro)</div>
    <div class="t" style="left:150.5px;top:104px;font-size:13px;color:#3a8ed8">-12.119327 °, -77.002950 °</div>
    <div class="t" style="left:150.5px;top:129px;font-size:13px;color:#d2403a">2025-02-17 12:08:25</div>
    <div class="t" style="left:136px;top:152px;font-size:13px;color:#3a8ed8">Mostrar eventos</div>
  </div>
</div>
<div class="a" id="frame"></div>
</body></html>
